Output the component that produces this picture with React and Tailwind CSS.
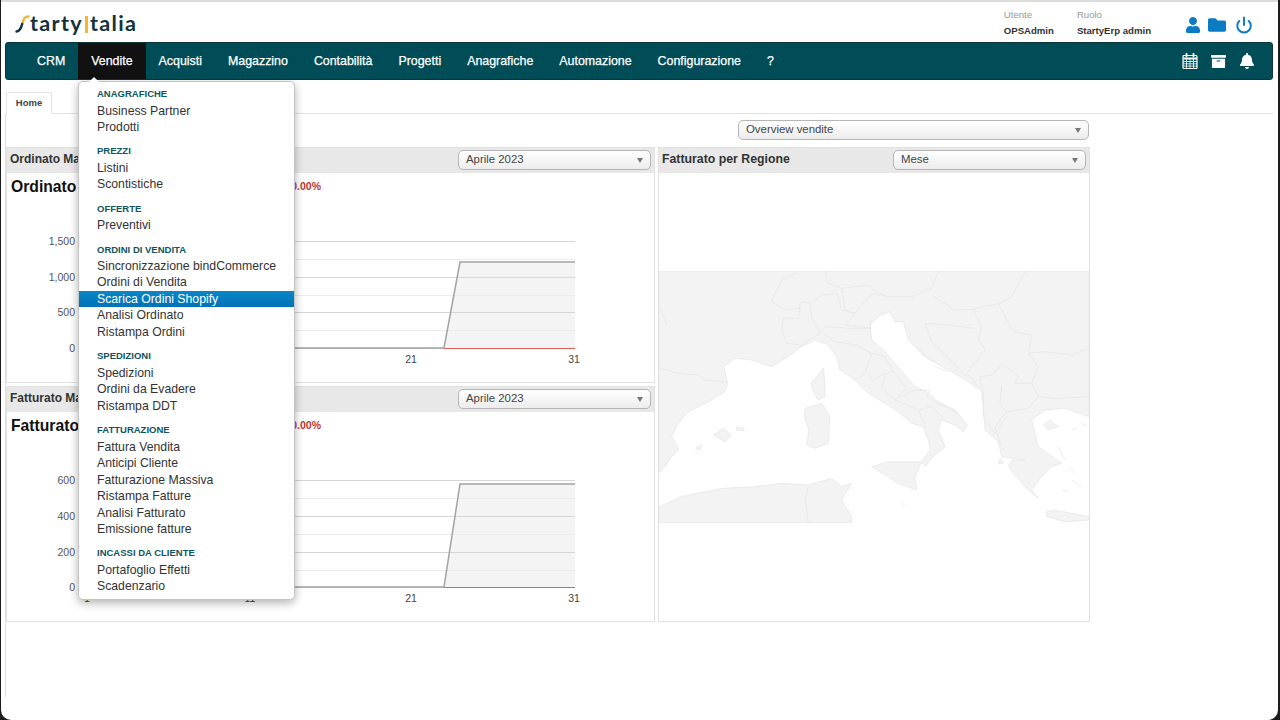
import React from "react";
import { FaUser, FaFolder, FaArchive, FaBell } from "react-icons/fa";
import { Power } from "lucide-react";

const navItems = ["CRM", "Vendite", "Acquisti", "Magazzino", "Contabilità", "Progetti", "Anagrafiche", "Automazione", "Configurazione", "?"];

const menu = [
  { title: "Anagrafiche", items: ["Business Partner", "Prodotti"] },
  { title: "Prezzi", items: ["Listini", "Scontistiche"] },
  { title: "Offerte", items: ["Preventivi"] },
  { title: "Ordini di vendita", items: ["Sincronizzazione bindCommerce", "Ordini di Vendita", "Scarica Ordini Shopify", "Analisi Ordinato", "Ristampa Ordini"] },
  { title: "Spedizioni", items: ["Spedizioni", "Ordini da Evadere", "Ristampa DDT"] },
  { title: "Fatturazione", items: ["Fattura Vendita", "Anticipi Cliente", "Fatturazione Massiva", "Ristampa Fatture", "Analisi Fatturato", "Emissione fatture"] },
  { title: "Incassi da cliente", items: ["Portafoglio Effetti", "Scadenzario"] },
];

function Select({ label, className }) {
  return (
    <div className={`flex h-[20px] items-center justify-between rounded-[5px] border border-[#b5b5b5] bg-gradient-to-b from-white to-[#ececec] pl-[7px] pr-[7px] text-[11.4px] text-[#444] ${className}`}>
      <span>{label}</span>
      <span className="h-0 w-0 border-x-[3.5px] border-t-[5px] border-x-transparent border-t-[#777]" />
    </div>
  );
}

function CalendarIcon() {
  return (
    <svg width="16" height="16" viewBox="0 0 16 16" fill="none" stroke="#fff">
      <rect x="1" y="2.5" width="14" height="13" rx="1" strokeWidth="1.2" />
      <path d="M1 5.5h14" strokeWidth="2" />
      <path d="M1 8.5h14M1 10.8h14M1 13.1h14M4.5 6v9M8 6v9M11.5 6v9" strokeWidth="0.8" />
      <path d="M4.5 0.8v2.6M11.5 0.8v2.6" strokeWidth="1.8" strokeLinecap="round" />
    </svg>
  );
}

// y positions are page coordinates, thanks to the viewBox
function Chart({ top, labels, rows, high }) {
  const bottom = rows[rows.length - 1];
  return (
    <svg width="647" height="182" viewBox={`7 ${top} 647 182`} className="block" fontFamily="'Liberation Sans', Arial, sans-serif">
      <path d={`M444 ${bottom} L460 ${high} H575 V${bottom} Z`} fill="#f4f4f4" />
      {rows.map((y, i) => (
        <line key={y} x1="82" x2="575" y1={y + 0.5} y2={y + 0.5} stroke={i % 2 === 0 ? "#d6d6d6" : "#ececec"} />
      ))}
      <path d={`M82 ${bottom} H444 L460 ${high} H575`} fill="none" stroke="#a3a3a3" strokeWidth="1.5" />
      <line x1="444" x2="575" y1={bottom + 0.5} y2={bottom + 0.5} stroke="#e0605a" />
      {labels.map((t, i) => (
        <text key={t} x="75" y={rows[i * 2] + 4} textAnchor="end" fontSize="10.5" fill="#555">{t}</text>
      ))}
      {[["1", 87], ["11", 250], ["21", 411], ["31", 574]].map(([t, x]) => (
        <text key={t} x={x} y={bottom + 15} textAnchor="middle" fontSize="10.5" fill="#444">{t}</text>
      ))}
    </svg>
  );
}

function ChartPanel({ header, title, top, labels, rows, high }) {
  return (
    <div className="h-[236px] border border-[#e2e2e2] bg-white">
      <div className="flex h-[25px] items-start justify-between bg-[#e8e8e8] pl-[3px] pr-[3px] pt-[2px]">
        <span className="text-[12px] font-bold leading-[18px] text-[#333]">{header}</span>
        <Select label="Aprile 2023" className="w-[193px]" />
      </div>
      <div className="flex h-[26px] w-[314px] items-center justify-between pl-[4px] pt-[2px]">
        <span className="text-[15.7px] font-bold text-[#111]">{title}</span>
        <span className="text-[10.5px] font-bold text-[#c0352f]">100.00%</span>
      </div>
      <Chart top={top} labels={labels} rows={rows} high={high} />
    </div>
  );
}

function MapDrawing() {
  const border = "#e4e4e4";
  return (
    <svg width="430" height="252" viewBox="12 33 1290 756" className="block">
      <g fill="#f3f3f3" stroke={border} strokeWidth="2" strokeLinejoin="round">
        <path d="M12 33H1302V470L1230 445L1170 450L1130 480L1150 560L1220 610L1190 620L1160 650L1130 690L1150 715L1110 680L1060 620L1070 600L1110 600L1040 590L1030 545L990 510L985 440L980 395L940 365L880 330L810 290L760 240L745 185L720 185L705 155L680 165L645 190L650 240L690 275L720 310L780 380L815 395L850 425L900 450L937 495L925 515L900 495L860 480L850 510L870 560L835 590L810 620L800 605L825 570L820 540L805 500L770 490L730 455L690 430L640 400L600 360L555 330L545 290L520 255L480 240L440 260L400 290L350 320L290 300L240 295L207 320L218 370L210 395L160 425L100 455L70 490L50 530L72 570L50 590L30 620L12 640Z" />
        <path d="M505 325L510 370L510 410L490 420L470 385L470 365L490 345Z" />
        <path d="M450 445L500 430L525 470L520 550L480 565L455 555L462 510L448 470Z" />
        <path d="M650 620L700 605L800 605L780 650L785 690L730 670Z" />
        <path d="M175 525L205 505L228 525L210 545Z" />
        <path d="M245 500L265 505L268 512L245 510Z" />
        <path d="M122 565L140 555L135 570Z" />
        <path d="M12 740L80 710L200 685L300 680L380 670L460 675L530 655L560 680L590 670L560 720L590 770L590 789H12Z" />
        <path d="M1175 755L1200 750L1302 770V780L1230 785L1175 770Z" />
        <path d="M1185 480L1210 500L1180 510L1165 495Z" />
        <path d="M1035 595L1045 610L1030 612Z" />
      </g>
      <g fill="none" stroke={border} strokeWidth="2" strokeLinejoin="round">
        <path d="M12 325L70 340L130 345L150 360L215 365" />
        <path d="M12 135L25 170L35 200" />
        <path d="M350 125L360 100L385 55L430 38" />
        <path d="M510 35L520 70L560 85L640 75L660 95L700 110L770 110L830 85L850 35" />
        <path d="M1110 35L1070 110L1030 130L955 148L900 150L830 105" />
        <path d="M955 148L980 200L970 240L990 270L935 340L975 385" />
        <path d="M1030 130L1075 215L1130 225L1120 280L1150 320L1130 370L1150 410L1200 415L1302 410" />
        <path d="M1120 280L1170 275L1250 285L1302 265" />
        <path d="M810 190L880 195L960 205M810 190L830 245L935 350" />
        <path d="M700 110L650 100L600 160L570 150L560 85" />
        <path d="M350 125L390 150L435 145L430 175L385 175L380 205L395 250L440 255L495 220L470 175L465 130L440 125L430 145" />
        <path d="M495 220L510 200L590 205L645 205L650 180" />
        <path d="M510 225L540 245L600 255L650 280L630 340L605 360" />
        <path d="M650 280L690 290L715 335L680 345L655 360L630 325" />
        <path d="M715 335L755 385L720 420L680 385L690 345" />
        <path d="M725 415L780 390L825 390L815 410L850 430L910 460" />
        <path d="M720 420L790 450L810 500M790 450L830 440L860 470" />
        <path d="M470 130L500 105L545 100L560 150L600 160L570 195L650 205" />
        <path d="M975 350L1010 345L1045 310L1090 350L1080 370L1130 370" />
        <path d="M1040 375L1035 430L1055 455L1120 445L1150 410" />
        <path d="M975 355L985 400L985 470L1020 520L1055 470" />
        <path d="M1055 455L1020 500L1040 560" />
        <path d="M460 680L450 720L460 789" />
        <path d="M1210 560L1230 600M1240 620L1260 640M1250 660L1280 680M1220 690L1240 695M1280 490L1295 500M1250 510L1265 505" />
        <path d="M735 725L750 737M120 575L130 580" />
        <path d="M790 265L830 305M840 320L880 335" />
      </g>
    </svg>
  );
}

export default function App() {
  return (
    <div className="relative h-[720px] w-[1280px] overflow-hidden bg-[#1c1c1c] font-['Liberation_Sans',Arial,sans-serif]">
      <div className="ml-px h-[720px] w-[1277px] rounded-b-[10px] border-t-2 border-[#dcdcdc] bg-white pl-[4px]">
        {/* header */}
        <div className="flex h-[40px] items-center justify-between pr-[25px]">
          <div className="flex items-center pl-[10px] pt-[4px] font-['Lato',sans-serif] text-[21.6px] font-bold leading-none tracking-[1.3px] text-[#14323d]">
            <svg width="15" height="18" viewBox="0 0 15 18" fill="none" strokeWidth="2.4" strokeLinecap="round">
              <path d="M13.5 1.5C9 1.5 8.5 5 7.2 9" stroke="#f5b62a" />
              <path d="M7.2 9C6 13 5 16 1.5 16.5" stroke="#14323d" />
            </svg>
            <span>tarty</span>
            <span className="mx-[2px] h-[17px] w-[3px] bg-[#f5b62a]" />
            <span>talia</span>
          </div>
          <div className="flex items-center pt-[1px]">
            <div className="flex flex-col gap-[5px] text-[9.6px] leading-[11px]">
              <span className="text-[#999]">Utente</span>
              <span className="font-bold text-[#333]">OPSAdmin</span>
            </div>
            <div className="ml-[23px] flex flex-col gap-[5px] text-[9.6px] leading-[11px]">
              <span className="text-[#999]">Ruolo</span>
              <span className="font-bold text-[#333]">StartyErp admin</span>
            </div>
            <div className="ml-[34px] flex items-center gap-[7px] pt-[5px] text-[#0b7cc4]">
              <FaUser size={16} />
              <FaFolder size={18} />
              <Power size={18} strokeWidth={2.6} className="ml-[2px]" />
            </div>
          </div>
        </div>

        {/* nav */}
        <div className="flex h-[38px] w-[1268px] items-stretch justify-between rounded-[3px] border border-[#0d333b] bg-[#004d57] pl-[18px] pr-[17px]">
          <div className="flex items-stretch">
            {navItems.map((n) => (
              <div key={n} className={`flex items-center px-[13px] text-[12.4px] text-white [-webkit-text-stroke:0.25px_white] ${n === "Vendite" ? "bg-[#111]" : ""}`}>
                {n}
              </div>
            ))}
          </div>
          <div className="flex items-center gap-[13px] text-white">
            <CalendarIcon />
            <FaArchive size={15} />
            <FaBell size={16} />
          </div>
        </div>

        {/* tabs */}
        <div className="mt-[12px] h-[22px] w-[1268px] border-b border-[#e4e4e4]">
          <div className="ml-px flex h-[22px] w-[46px] items-center justify-center rounded-t-[2px] border border-b-white border-[#e4e4e4] bg-white text-[9.5px] font-bold text-[#444]">
            Home
          </div>
        </div>

        {/* content */}
        <div className="h-[583px] w-[1085px] border-l border-[#e0e0e0]">
          <div className="flex justify-end pt-[6px] pr-[1px]">
            <Select label="Overview vendite" className="w-[351px]" />
          </div>
          <div className="mt-[7px] flex gap-[3px]">
            <div className="flex w-[649px] flex-col gap-[3px]">
              <ChartPanel header="Ordinato Ma" title="Ordinato" top={199} labels={["1,500", "1,000", "500", "0"]} rows={[241, 259, 277, 295, 312, 330, 348]} high={262} />
              <ChartPanel header="Fatturato Ma" title="Fatturato" top={438} labels={["600", "400", "200", "0"]} rows={[480, 498, 516, 534, 552, 570, 587]} high={484} />
            </div>
            <div className="h-[475px] w-[432px] border border-[#e2e2e2] bg-white">
              <div className="flex h-[25px] items-start justify-between bg-[#e8e8e8] pl-[3px] pr-[3px] pt-[2px]">
                <span className="text-[12.3px] font-bold leading-[18px] text-[#333]">Fatturato per Regione</span>
                <Select label="Mese" className="w-[193px]" />
              </div>
              <div className="pt-[98px]">
                <MapDrawing />
              </div>
            </div>
          </div>
        </div>
      </div>

      {/* dropdown */}
      <div className="absolute left-[78px] top-[81px] w-[217px] rounded-[5px] border border-[#c4c4c4] bg-white pb-[4px] pt-[4px] shadow-[0_3px_10px_rgba(0,0,0,0.3)]">
        <span className="absolute -top-[5px] left-[10px] h-0 w-0 border-x-[5px] border-b-[5px] border-x-transparent border-b-white" />
        {menu.map((s, i) => (
          <div key={s.title} className={i > 0 ? "mt-[7.8px]" : ""}>
            <div className="flex h-[16.5px] items-center pl-[18px] text-[9.5px] font-bold uppercase text-[#0f5560]">{s.title}</div>
            {s.items.map((it) => (
              <div
                key={it}
                className={`flex h-[16.5px] items-center pl-[18px] text-[12.25px] ${it === "Scarica Ordini Shopify" ? "bg-gradient-to-b from-[#0b86c8] to-[#0072b5] text-white" : "text-[#333]"}`}
              >
                {it}
              </div>
            ))}
          </div>
        ))}
      </div>
    </div>
  );
}
